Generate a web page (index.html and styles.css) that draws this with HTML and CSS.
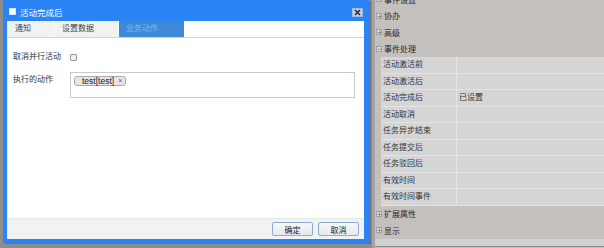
FILE: index.html
```html
<!DOCTYPE html>
<html>
<head>
  <meta charset="UTF-8" />
  <title>活动完成后</title>
  <link rel="stylesheet" href="styles.css">
</head>
<body>
  <div class="screen">
    <div class="stage">
      <div class="dialog">
        <div class="titlebar">
          <span class="title-icon"></span>
          <span class="title">活动完成后</span>
          <span class="close">
            <svg width="11" height="9" viewBox="0 0 11 9">
              <path d="M3 2 L8 7 M8 2 L3 7" stroke="#2b2b2b" stroke-width="1.6" />
            </svg>
          </span>
        </div>
        <div class="dialog-body">
          <div class="tabs">
            <div class="tab">通知</div>
            <div class="tab tab-wide">设置数据</div>
            <div class="tab tab-wide active">业务动作</div>
          </div>
          <div class="form">
            <div class="form-row">
              <label class="label">取消并行活动</label>
              <span class="check"></span>
            </div>
            <div class="form-row top">
              <label class="label">执行的动作</label>
              <div class="actions">
                <span class="tag">test[test]<span class="tag-x">×</span></span>
              </div>
            </div>
          </div>
          <div class="footer">
            <button class="btn">确定</button>
            <button class="btn">取消</button>
          </div>
        </div>
      </div>
    </div>

    <div class="panel">
      <div class="group"><span class="toggle">+</span>事件设置</div>
      <div class="group"><span class="toggle">+</span>协办</div>
      <div class="group"><span class="toggle">+</span>高级</div>
      <div class="group"><span class="toggle">−</span>事件处理</div>
      <div class="prop"><div class="name">活动激活前</div><div class="value"></div></div>
      <div class="prop"><div class="name">活动激活后</div><div class="value"></div></div>
      <div class="prop"><div class="name">活动完成后</div><div class="value">已设置</div></div>
      <div class="prop"><div class="name">活动取消</div><div class="value"></div></div>
      <div class="prop"><div class="name">任务异步结束</div><div class="value"></div></div>
      <div class="prop"><div class="name">任务提交后</div><div class="value"></div></div>
      <div class="prop"><div class="name">任务驳回后</div><div class="value"></div></div>
      <div class="prop"><div class="name">有效时间</div><div class="value"></div></div>
      <div class="prop"><div class="name">有效时间事件</div><div class="value"></div></div>
      <div class="group"><span class="toggle">+</span>扩展属性</div>
      <div class="group"><span class="toggle">+</span>显示</div>
      <div class="panel-foot"></div>
    </div>
  </div>
</body>
</html>
```

FILE: styles.css
```css
* {
  margin: 0;
  padding: 0;
  box-sizing: border-box;
}
body {
  font-family: "Liberation Sans", "Noto Sans CJK SC", sans-serif;
  font-size: 8px;
  color: #333;
  background: #8c8c8c;
}
.screen {
  display: flex;
  height: 248px;
  overflow: hidden;
}
.stage {
  width: 372px;
  flex: none;
  padding-left: 3px;
  background: #8d8d8d;
}
.dialog {
  width: 366px;
  height: 243px;
  background: #2a84f5;
  display: flex;
  flex-direction: column;
  box-shadow: 2px 1px 0 #737373;
}
.titlebar {
  height: 21px;
  flex: none;
  display: flex;
  align-items: center;
  padding: 0 6px 0 6px;
  color: #fff;
}
.title-icon {
  width: 7px;
  height: 7px;
  background: #fff;
  border: 1px solid #d3e3f7;
  margin-top: 2px;
}
.title {
  margin-left: 4px;
  font-size: 8.5px;
  margin-top: 2px;
}
.close {
  margin-left: auto;
  margin-top: 4px;
  width: 11px;
  height: 9px;
  background: #bcd3ee;
  border: 1px solid #9db9de;
  display: flex;
}
.close svg {
  margin: -1px;
}
.dialog-body {
  flex: 1;
  margin: 0 5px 4px 4px;
  background: #fff;
  display: flex;
  flex-direction: column;
  border-left: 1px solid #dbe9fb;
}
.tabs {
  height: 17px;
  flex: none;
  display: flex;
  border-bottom: 1px solid #c6d8ee;
}
.tab {
  width: 47px;
  background: #f2f2f2;
  padding-left: 7px;
  line-height: 16px;
  color: #444;
  border-right: 1px solid #fafafa;
}
.tab-wide {
  width: 64px;
}
.tab.active {
  width: 65px;
  background: #3d89d8;
  color: #86b8ec;
  border-right: none;
}
.form {
  flex: 1;
  padding: 13px 0 0 5px;
}
.form-row {
  display: flex;
  align-items: center;
  height: 12px;
  margin-bottom: 9px;
}
.form-row.top {
  align-items: flex-start;
  height: auto;
}
.form-row.top .label {
  margin-top: 3px;
}
.label {
  width: 57px;
  flex: none;
  line-height: 10px;
  color: #333;
}
.check {
  width: 7px;
  height: 7px;
  border: 1px solid #9a9a9a;
  background: #eee;
  border-radius: 1px;
}
.actions {
  width: 285px;
  height: 26px;
  border: 1px solid #c9c9c9;
  padding: 3px 0 0 3px;
}
.tag {
  display: inline-flex;
  align-items: center;
  height: 10px;
  padding: 0 3px 0 7px;
  border: 1px solid #a9a9a9;
  border-radius: 3px;
  background: #e6e6e6;
  color: #222;
  font-size: 8.5px;
  line-height: 8px;
}
.tag-x {
  margin-left: 4px;
  font-size: 7px;
  color: #555;
}
.footer {
  height: 21px;
  flex: none;
  background: #f2f2f2;
  border-top: 1px solid #e3ede3;
  display: flex;
  justify-content: flex-end;
  align-items: center;
  gap: 5px;
  padding-right: 5px;
}
.btn {
  width: 41px;
  height: 14px;
  font-family: inherit;
  font-size: 8px;
  color: #222;
  border: 1px solid #8fabd3;
  border-radius: 2px;
  background: linear-gradient(#f8f8f8, #e3e9f1);
}
.panel {
  flex: 1;
  background: #c4c0be;
  border-left: 3px solid #a5a3a2;
  margin-top: -9px;
  color: #2a2a2a;
}
.group {
  height: 16.5px;
  display: flex;
  align-items: center;
  padding-left: 1px;
}
.toggle {
  width: 6px;
  height: 6px;
  border: 1px solid #a0a0a0;
  background: #dcdcdc;
  font-size: 6px;
  line-height: 4px;
  text-align: center;
  color: #555;
  margin-right: 2px;
  font-family: "DejaVu Sans", sans-serif;
}
.prop {
  height: 16.5px;
  display: flex;
  margin-left: 6px;
  background: #d5d5d5;
  border-bottom: 1px solid #e3e3e3;
}
.prop .name {
  width: 76px;
  padding-left: 2px;
  border-right: 1px solid #e3e3e3;
  line-height: 15.5px;
  color: #333;
}
.prop .value {
  flex: 1;
  padding-left: 2px;
  line-height: 15.5px;
  color: #333;
}
.panel-foot {
  height: 8px;
  background: #d2d2d2;
  border-bottom: 1px solid #8a8a8a;
}
```
